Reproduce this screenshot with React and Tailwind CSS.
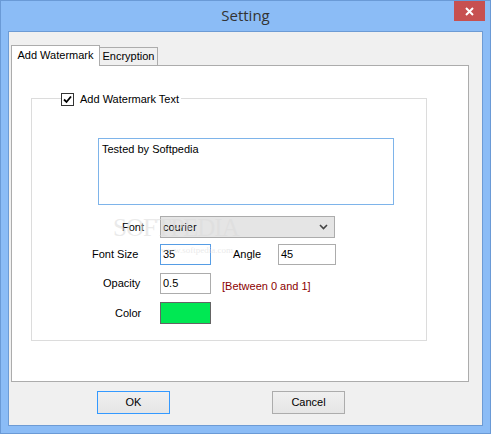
import { useState } from "react";

const FONT = { fontFamily: '"Liberation Sans", Arial, sans-serif' };

const Row = ({ labelPad, label, height = "h-[20px]", children }) => (
	<div className={`flex items-center ${height}`}>
		<div className="w-[128px] shrink-0" style={{ paddingLeft: labelPad }}>
			{label}
		</div>
		{children}
	</div>
);

const App = () => {
	const [checked, setChecked] = useState(true);

	return (
		<div
			className="w-[491px] h-[434px] bg-[#8bbcf6] border border-[#6a9ad6] flex flex-col text-[11px] text-black"
			style={FONT}
		>
			{/* title bar */}
			<div className="relative h-[30px] shrink-0 flex items-center justify-center">
				<span
					className="text-[15px] text-[#333] mt-[-1px]"
					style={{ fontFamily: '"Open Sans", "Noto Sans", sans-serif' }}
				>
					Setting
				</span>
				<div className="absolute right-[5px] top-0 w-[31px] h-[20px] bg-[#c75050] flex items-center justify-center">
					<svg width="9" height="9" viewBox="0 0 9 9">
						<path d="M1 1 L8 8 M8 1 L1 8" stroke="#fff" strokeWidth="2" />
					</svg>
				</div>
			</div>

			{/* client area */}
			<div className="mx-[7px] mb-[7px] flex-1 bg-[#f0f0f0] border border-[#6d9bd4] flex flex-col pl-[2px] pt-[12px]">
				{/* tabs */}
				<div className="flex items-end h-[21px]">
					<div className="relative z-10 h-[21px] w-[89px] bg-white border border-b-0 border-[#acacac] flex items-center justify-center pb-[1px] -mb-px">
						Add Watermark
					</div>
					<div className="h-[18px] w-[58px] bg-[#f0f0f0] border border-l-0 border-b-0 border-[#acacac] flex items-center justify-center">
						Encryption
					</div>
				</div>

				{/* tab panel */}
				<div className="w-[458px] h-[317px] bg-white border border-[#acacac] pt-[32px] pl-[19px] relative">
					{/* group box */}
					<div className="w-[396px] h-[243px] border border-[#dcdcdc] flex flex-col">
						<label className="flex items-center gap-[6px] bg-white self-start ml-[29px] mt-[-7px] pr-[2px] h-[14px]">
							<span
								onClick={() => setChecked(!checked)}
								className="w-[13px] h-[13px] border border-[#333] bg-white flex items-center justify-center"
							>
								{checked && (
									<svg width="9" height="9" viewBox="0 0 9 9">
										<path d="M1 4.5 L3.5 7 L8 1.5" stroke="#000" strokeWidth="1.8" fill="none" />
									</svg>
								)}
							</span>
							<span>Add Watermark Text</span>
						</label>

						<div className="ml-[66px] mt-[32px] w-[296px] h-[67px] border border-[#7eb4ea] px-[3px] pt-[2px]">
							Tested by Softpedia
						</div>

						<div className="mt-[11px] flex flex-col">
							<Row labelPad="90px" label="Font" height="h-[22px]">
								<div className="w-[175px] h-[22px] bg-[#e5e5e5] border border-[#acacac] flex items-center justify-between pl-[2px] pr-[6px]">
									<span>courier</span>
									<svg width="9" height="6" viewBox="0 0 9 6">
										<path d="M1 1 L4.5 4.5 L8 1" stroke="#444" strokeWidth="1.6" fill="none" />
									</svg>
								</div>
							</Row>

							<div className="mt-[6px]">
								<Row labelPad="60px" label="Font Size">
									<div className="w-[51px] h-[21px] border border-[#569de5] flex items-center px-[2px]">35</div>
									<div className="w-[67px] pl-[22px] shrink-0">Angle</div>
									<div className="w-[58px] h-[21px] border border-[#acacac] flex items-center px-[2px]">45</div>
								</Row>
							</div>

							<div className="mt-[9px]">
								<Row labelPad="71px" label="Opacity">
									<div className="w-[51px] h-[21px] border border-[#acacac] flex items-center px-[2px]">0.5</div>
									<div className="pl-[11px] pt-[6px] text-[#8b0000]">[Between 0 and 1]</div>
								</Row>
							</div>

							<div className="mt-[9px]">
								<Row labelPad="83px" label="Color" height="h-[22px]">
									<div className="w-[51px] h-[22px] border border-[#646464] bg-[#00e853]" />
								</Row>
							</div>
						</div>
					</div>

					{/* faint softpedia watermark overlay */}
					<div className="absolute left-[101px] top-[149px] pointer-events-none select-none text-[#dcdcdc]/60 leading-none">
						<div className="text-[25px] tracking-[-1px]" style={{ fontFamily: '"Liberation Serif", serif' }}>
							SOFTPEDIA
						</div>
						<div className="text-[9px] ml-[48px] mt-[6px]" style={{ fontFamily: '"Liberation Serif", serif' }}>
							www.softpedia.com
						</div>
					</div>
				</div>

				{/* buttons */}
				<div className="flex mt-[9px]">
					<button className="ml-[86px] w-[73px] h-[23px] border border-[#3399ff] bg-gradient-to-b from-[#f0f0f0] to-[#e5e5e5]">
						OK
					</button>
					<button className="ml-[102px] w-[73px] h-[23px] border border-[#acacac] bg-gradient-to-b from-[#f0f0f0] to-[#e5e5e5]">
						Cancel
					</button>
				</div>
			</div>
		</div>
	);
};

export default App;
